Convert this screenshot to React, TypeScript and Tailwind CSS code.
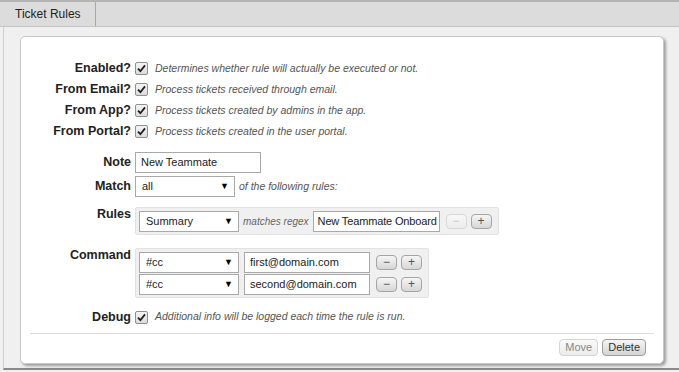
import React from "react";

const font = { fontFamily: '"Liberation Sans", Arial, sans-serif' };

function Check() {
  return (
    <span className="inline-flex h-[13px] w-[13px] shrink-0 items-center justify-center rounded-[2px] border border-[#8f8f8f] bg-gradient-to-b from-[#f4f4f4] to-[#dcdcdc]">
      <svg width="9" height="9" viewBox="0 0 9 9">
        <path d="M1 4.6 L3.4 7.2 L8 1.4" fill="none" stroke="#1e1e1e" strokeWidth="1.8" />
      </svg>
    </span>
  );
}

function Select({ value, w }: { value: string; w: string }) {
  return (
    <div className={`flex h-[21px] items-center justify-between border border-[#a9a9a9] bg-white pl-[6px] pr-[5px] text-[11px] text-[#222] ${w}`}>
      <span>{value}</span>
      <span className="text-[9px] leading-none text-black">▼</span>
    </div>
  );
}

function Field({ value, w }: { value: string; w: string }) {
  return (
    <div className={`flex h-[21px] items-center overflow-hidden whitespace-nowrap border border-[#a9a9a9] bg-white text-[11px] text-[#222] ${w}`}>
      {value}
    </div>
  );
}

function Btn({ label, dim }: { label: string; dim?: boolean }) {
  return (
    <span
      className={`flex h-[15px] w-[21px] items-center justify-center rounded-[4px] border bg-gradient-to-b text-[12px] leading-none ${
        dim
          ? "border-[#d8d8d8] from-[#f8f8f8] to-[#ececec] text-[#c8c8c8]"
          : "border-[#a5a5a5] from-[#f6f6f6] to-[#d6d6d6] text-[#555]"
      }`}
    >
      {label}
    </span>
  );
}

function Label({ children, top }: { children: React.ReactNode; top?: string }) {
  return (
    <div className={`w-[110px] shrink-0 text-right text-[12.5px] font-bold text-[#222] ${top ?? ""}`}>
      {children}
    </div>
  );
}

const checks = [
  ["Enabled?", "Determines whether rule will actually be executed or not."],
  ["From Email?", "Process tickets received through email."],
  ["From App?", "Process tickets created by admins in the app."],
  ["From Portal?", "Process tickets created in the user portal."],
];

export default function App() {
  return (
    <div className="h-[372px] w-[679px] overflow-hidden bg-[#f0f0f0]" style={font}>
      <div className="flex h-[27px] border-t-2 border-b border-t-[#b4b4b4] border-b-[#c4c4c4] bg-[#dcdcdc]">
        <div className="ml-[3px] flex w-[93px] items-center border-r border-[#a8a8a8] pl-[12px] text-[12px] text-[#222]">
          Ticket Rules
        </div>
      </div>
      <div className="ml-[3px] flex h-[343px] flex-col border-l border-[#d0d0d0] border-b-2 border-b-[#8a8a8a] pl-[16px] pr-[15px] pt-[9px]">
        <div className="flex h-[328px] flex-col rounded-[5px] border border-[#c8c8c8] bg-white pt-[21px] shadow-[2px_2px_3px_rgba(0,0,0,0.35)]">
          {checks.map(([l, d]) => (
            <div key={l} className="flex h-[21px] items-center gap-[4px]">
              <Label>{l}</Label>
              <Check />
              <span className="ml-[3px] text-[10.5px] italic text-[#555]">{d}</span>
            </div>
          ))}

          <div className="mt-[10px] flex h-[20px] items-center gap-[4px]">
            <Label>Note</Label>
            <Field value="New Teammate" w="w-[126px] h-[20px] px-[5px]" />
          </div>

          <div className="mt-[4px] flex h-[21px] items-center gap-[4px]">
            <Label>Match</Label>
            <Select value="all" w="w-[100px]" />
            <span className="text-[10.5px] italic text-[#555]">of the following rules:</span>
          </div>

          <div className="mt-[10px] flex gap-[4px]">
            <Label top="leading-[14px]">Rules</Label>
            <div className="flex h-[28px] w-[364px] items-center gap-[4px] rounded-[2px] border border-[#e2e2e2] bg-[#f0f0f0] pl-[3px]">
              <Select value="Summary" w="w-[100px]" />
              <span className="text-[10px] italic text-[#666]">matches regex</span>
              <Field value="New Teammate Onboard" w="w-[127px] pl-[4px] tracking-[-0.15px]" />
              <div className="ml-[2px] flex gap-[4px]">
                <Btn label="−" dim />
                <Btn label="+" />
              </div>
            </div>
          </div>

          <div className="mt-[13px] flex gap-[4px]">
            <Label top="leading-[14px]">Command</Label>
            <div className="flex h-[50px] w-[294px] flex-col justify-center gap-[1px] rounded-[2px] border border-[#e2e2e2] bg-[#f0f0f0] pl-[3px]">
              {["first@domain.com", "second@domain.com"].map((v) => (
                <div key={v} className="flex items-center gap-[5px]">
                  <Select value="#cc" w="w-[100px]" />
                  <Field value={v} w="w-[126px] px-[5px]" />
                  <div className="ml-[1px] flex gap-[4px]">
                    <Btn label="−" />
                    <Btn label="+" />
                  </div>
                </div>
              ))}
            </div>
          </div>

          <div className="mt-[9px] flex h-[20px] items-center gap-[4px]">
            <Label>Debug</Label>
            <Check />
            <span className="ml-[3px] text-[10.5px] italic text-[#555]">
              Additional info will be logged each time the rule is run.
            </span>
          </div>

          <div className="mx-[9px] mt-[6px] border-t border-[#dcdcdc]" />

          <div className="mr-[17px] mt-[5px] flex justify-end gap-[4px]">
            <span className="flex h-[17px] items-center rounded-[4px] border border-[#d4d4d4] bg-gradient-to-b from-[#fafafa] to-[#ececec] px-[5px] text-[11px] text-[#888]">
              Move
            </span>
            <span className="flex h-[17px] items-center rounded-[4px] border border-[#9e9e9e] bg-gradient-to-b from-[#f6f6f6] to-[#d4d4d4] px-[5px] text-[11px] text-[#333]">
              Delete
            </span>
          </div>
        </div>
      </div>
    </div>
  );
}
